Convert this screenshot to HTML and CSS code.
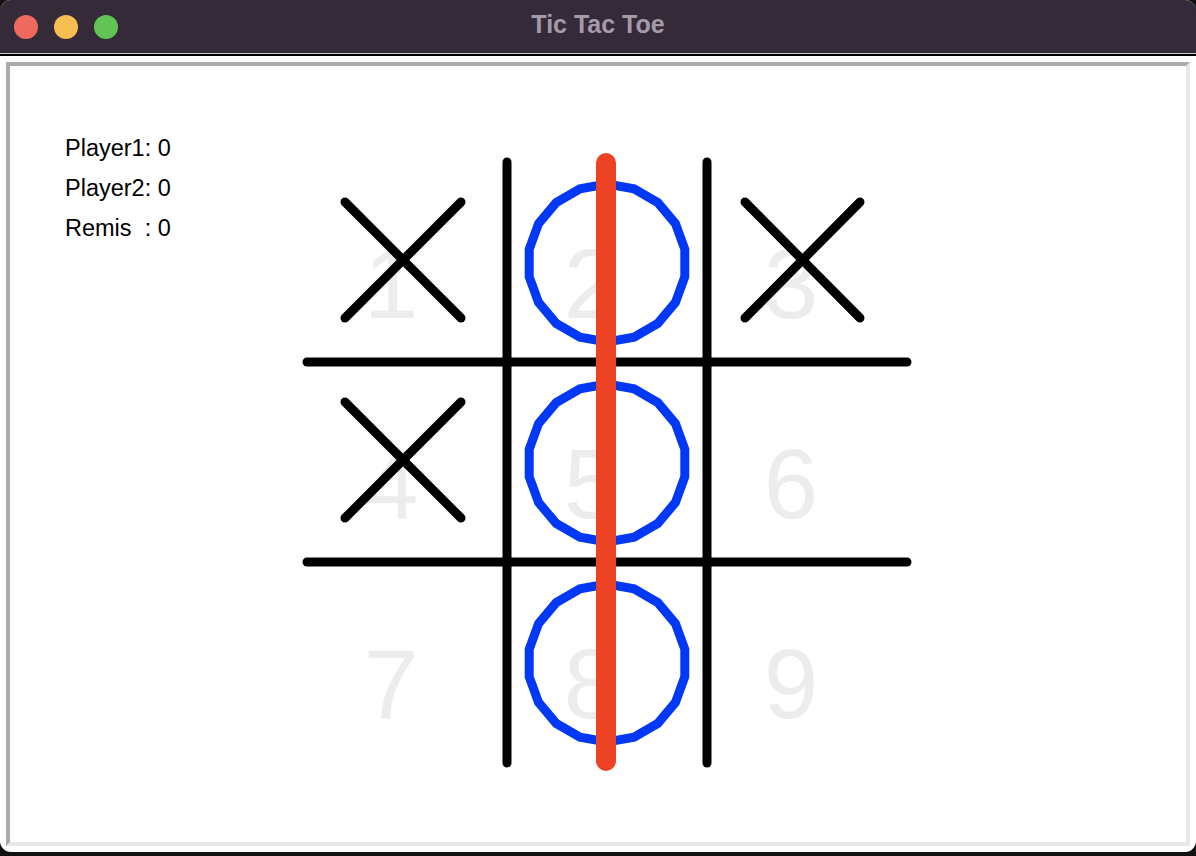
FILE: index.html
```html
<!DOCTYPE html>
<html lang="de">
<head>
<meta charset="utf-8">
<title>Tic Tac Toe</title>
<link rel="stylesheet" href="styles.css">
</head>
<body>
<div class="window">
  <div class="titlebar">
    <div class="lights">
      <span class="light red"></span>
      <span class="light yellow"></span>
      <span class="light green"></span>
    </div>
    <div class="title">Tic Tac Toe</div>
    <div class="spacer"></div>
  </div>
  <div class="content">
    <div class="canvas">
      <svg class="board" width="1176" height="776" viewBox="10 66 1176 776" xmlns="http://www.w3.org/2000/svg">
        <defs>
          <polygon id="o" points="0,-79 -27.02,-74.24 -50.78,-60.51 -68.41,-39.5 -77.8,-13.72 -77.8,13.72 -68.41,39.5 -50.78,60.51 -27.02,74.24 0,79 27.02,74.24 50.78,60.51 68.41,39.5 77.8,13.72 77.8,-13.72 68.41,-39.5 50.78,-60.51 27.02,-74.24"/>
        </defs>
        <g class="digits">
          <text x="391" y="318">1</text>
          <text x="591" y="318">2</text>
          <text x="791" y="318">3</text>
          <text x="391" y="518">4</text>
          <text x="591" y="518">5</text>
          <text x="791" y="518">6</text>
          <text x="391" y="718">7</text>
          <text x="591" y="718">8</text>
          <text x="791" y="718">9</text>
        </g>
        <g class="grid">
          <line x1="507" y1="162" x2="507" y2="763"/>
          <line x1="707" y1="162" x2="707" y2="763"/>
          <line x1="307" y1="362" x2="907" y2="362"/>
          <line x1="307" y1="562" x2="907" y2="562"/>
        </g>
        <g class="cross">
          <line x1="345" y1="202" x2="461" y2="318"/>
          <line x1="461" y1="202" x2="345" y2="318"/>
          <line x1="745" y1="202" x2="860" y2="318"/>
          <line x1="860" y1="202" x2="745" y2="318"/>
          <line x1="345" y1="402" x2="461" y2="518"/>
          <line x1="461" y1="402" x2="345" y2="518"/>
        </g>
        <g class="nought">
          <use href="#o" x="607" y="263"/>
          <use href="#o" x="607" y="463"/>
          <use href="#o" x="607" y="663"/>
        </g>
        <line class="win" x1="606" y1="163" x2="606" y2="761"/>
      </svg>
      <div class="scores">
        <div class="score">Player1: 0</div>
        <div class="score">Player2: 0</div>
        <div class="score">Remis  : 0</div>
      </div>
    </div>
  </div>
</div>
</body>
</html>
```
FILE: styles.css
```css
html, body {
  margin: 0;
  padding: 0;
}
body {
  background: #111111;
  width: 1196px;
  height: 856px;
  overflow: hidden;
}
.window {
  width: 1196px;
  height: 852px;
  background: #ffffff;
  border-radius: 11px;
  overflow: hidden;
}
.titlebar {
  height: 53px;
  background: #352a38;
  display: grid;
  grid-template-columns: 1fr auto 1fr;
  align-items: center;
  border-bottom: 1px solid #cfcfcf;
  box-shadow: 0 2px 0 #000000;
}
.lights {
  display: flex;
  gap: 16px;
  padding-left: 14px;
}
.light {
  width: 24px;
  height: 24px;
  border-radius: 50%;
}
.red { background: #ee6a5f; }
.yellow { background: #f6be50; }
.green { background: #61c454; }
.title {
  font-family: "Liberation Sans", Arial, sans-serif;
  font-weight: bold;
  font-size: 25px;
  color: #a59aa9;
  padding-bottom: 4px;
}
.content {
  padding: 8px 6px 6px 6px;
}
.canvas {
  width: 1176px;
  height: 776px;
  border-style: solid;
  border-width: 4px;
  border-color: #aaaaaa #e8e8e8 #e8e8e8 #aaaaaa;
  display: grid;
  background: #ffffff;
}
.board, .scores {
  grid-area: 1 / 1;
}
.board {
  display: block;
}
.scores {
  align-self: start;
  justify-self: start;
  padding: 62px 0 0 55px;
  font-family: "Liberation Sans", Arial, sans-serif;
  font-size: 23.5px;
  line-height: 40px;
  color: #000000;
}
.score {
  white-space: pre;
}
.digits text {
  font-family: "Liberation Sans", Arial, sans-serif;
  font-size: 98px;
  fill: #ececec;
  text-anchor: middle;
}
.grid line, .cross line {
  stroke: #000000;
  stroke-width: 9;
  stroke-linecap: round;
}
.nought use {
  fill: none;
  stroke: #0038f5;
  stroke-width: 9;
}
.win {
  stroke: #ee4224;
  stroke-width: 20;
  stroke-linecap: round;
}
```
